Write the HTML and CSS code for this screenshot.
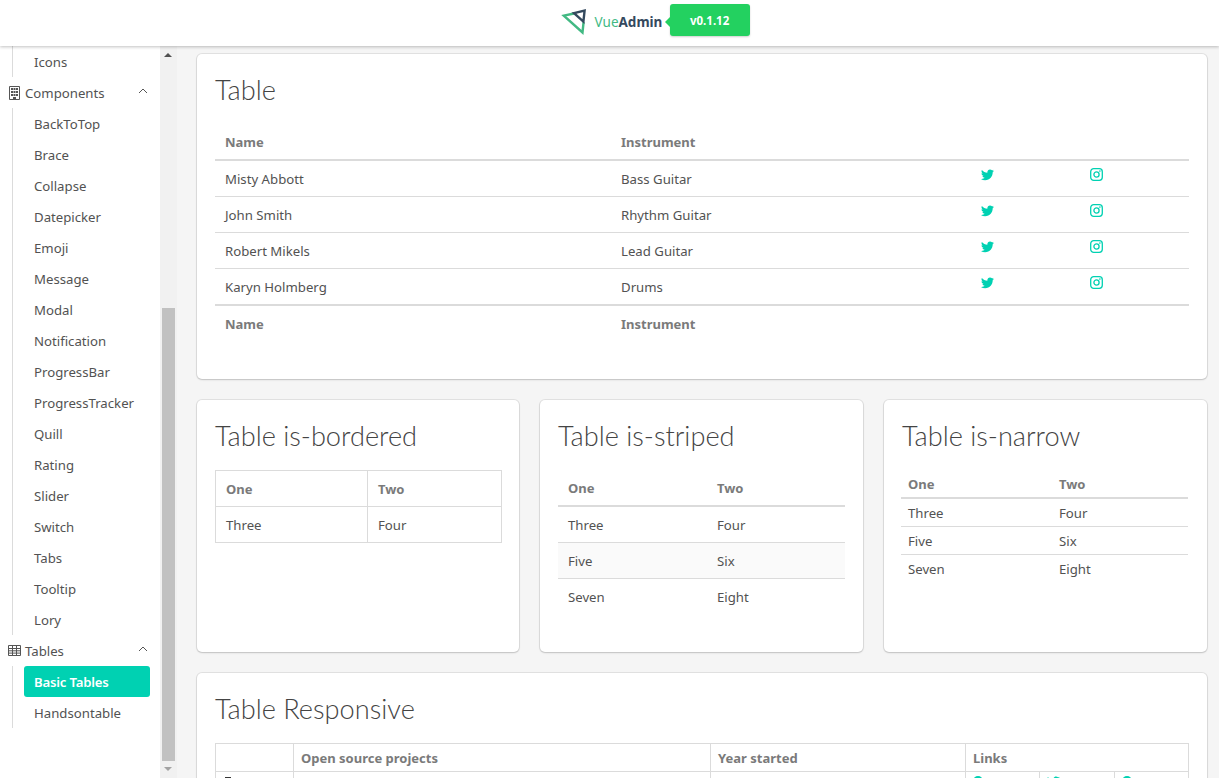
FILE: index.html
```html
<!DOCTYPE html>
<html lang="en">
	<head>
		<title>Basic Tables</title>
		<meta charset="utf-8">
		<link rel="stylesheet" href="styles.css">
	</head>

	<body>
		<svg class="sprites" width="0" height="0">
			<symbol id="twitter" viewBox="0 0 24 24"><path d="M22.46,6C21.69,6.35 20.86,6.58 20,6.69C20.88,6.16 21.56,5.32 21.88,4.31C21.05,4.81 20.13,5.16 19.16,5.36C18.37,4.5 17.26,4 16,4C13.65,4 11.73,5.92 11.73,8.29C11.73,8.63 11.77,8.96 11.84,9.27C8.28,9.09 5.11,7.38 3,4.79C2.63,5.42 2.42,6.16 2.42,6.94C2.42,8.43 3.17,9.75 4.33,10.5C3.62,10.5 2.96,10.3 2.38,10C2.38,10 2.38,10 2.38,10.03C2.38,12.11 3.86,13.85 5.82,14.24C5.46,14.34 5.08,14.39 4.69,14.39C4.42,14.39 4.15,14.36 3.89,14.31C4.43,16 6,17.26 7.89,17.29C6.43,18.44 4.58,19.13 2.56,19.13C2.22,19.13 1.88,19.11 1.54,19.07C3.44,20.29 5.7,21 8.12,21C16,21 20.33,14.46 20.33,8.79C20.33,8.6 20.33,8.42 20.32,8.23C21.16,7.63 21.88,6.87 22.46,6Z"/></symbol>
			<symbol id="instagram" viewBox="0 0 13 13"><rect x="0.7" y="0.7" width="11.6" height="11.6" rx="3" fill="none" stroke="currentColor" stroke-width="1.3"/><circle cx="6.5" cy="6.5" r="2.6" fill="none" stroke="currentColor" stroke-width="1.3"/><circle cx="9.9" cy="3.1" r="0.8"/></symbol>
			<symbol id="chevron" viewBox="0 0 10 6"><path d="M1 5l4-4 4 4" fill="none" stroke="currentColor" stroke-width="1"/></symbol>
		</svg>

		<header class="topbar">
			<svg class="logo" width="26" height="28" viewBox="0 0 26 28">
				<path d="M13 5.5L2.8 7.6 21.5 24.5 22.6 14" fill="none" stroke="#42b983" stroke-width="2.4"/>
				<path d="M13 5.2L23.6 2.6 22.4 13.6z" fill="none" stroke="#34495e" stroke-width="2.4"/>
			</svg>
			<span class="brand">Vue<b>Admin</b><span class="version">v0.1.12</span></span>
		</header>

		<div class="layout">
			<aside class="sidebar">
				<nav class="menu">
					<ul class="sublist">
						<li>Icons</li>
					</ul>
					<div class="menu-head">
						<svg class="menu-icon" width="13" height="14" viewBox="0 0 13 14"><path d="M1.5.5h10v13h-10z" fill="none" stroke="currentColor"/><path d="M3 2h2v2H3zM5.5 2h2v2h-2zM8 2h2v2H8zM3 5h2v2H3zM5.5 5h2v2h-2zM8 5h2v2H8zM3 8h2v2H3zM5.5 8h2v2h-2zM8 8h2v2H8zM5 11h3v2H5z" fill="currentColor"/></svg>
						<span>Components</span>
						<svg class="chevron"><use href="#chevron"/></svg>
					</div>
					<ul class="sublist">
						<li>BackToTop</li>
						<li>Brace</li>
						<li>Collapse</li>
						<li>Datepicker</li>
						<li>Emoji</li>
						<li>Message</li>
						<li>Modal</li>
						<li>Notification</li>
						<li>ProgressBar</li>
						<li>ProgressTracker</li>
						<li>Quill</li>
						<li>Rating</li>
						<li>Slider</li>
						<li>Switch</li>
						<li>Tabs</li>
						<li>Tooltip</li>
						<li>Lory</li>
					</ul>
					<div class="menu-head">
						<svg class="menu-icon" width="13" height="11" viewBox="0 0 13 11"><path d="M.5.5h12v10H.5zM.5 3.5h12M.5 5.8h12M.5 8.1h12M4.5 .5v10M8.5 .5v10" fill="none" stroke="currentColor"/></svg>
						<span>Tables</span>
						<svg class="chevron"><use href="#chevron"/></svg>
					</div>
					<ul class="sublist">
						<li class="active">Basic Tables</li>
						<li>Handsontable</li>
					</ul>
				</nav>
				<div class="scrollbar">
					<span class="arrow up"></span>
					<div class="thumb"></div>
					<span class="arrow down"></span>
				</div>
			</aside>

			<main class="content">
				<section class="card main-card">
					<h1>Table</h1>
					<table class="tbl plain">
						<thead>
							<tr><th class="w-name">Name</th><th class="w-inst">Instrument</th><th class="w-soc"></th><th></th></tr>
						</thead>
						<tfoot>
							<tr><th>Name</th><th>Instrument</th><th></th><th></th></tr>
						</tfoot>
						<tbody>
							<tr><td>Misty Abbott</td><td>Bass Guitar</td><td class="soc"><svg class="ic tw"><use href="#twitter"/></svg></td><td class="soc"><svg class="ic ig"><use href="#instagram"/></svg></td></tr>
							<tr><td>John Smith</td><td>Rhythm Guitar</td><td class="soc"><svg class="ic tw"><use href="#twitter"/></svg></td><td class="soc"><svg class="ic ig"><use href="#instagram"/></svg></td></tr>
							<tr><td>Robert Mikels</td><td>Lead Guitar</td><td class="soc"><svg class="ic tw"><use href="#twitter"/></svg></td><td class="soc"><svg class="ic ig"><use href="#instagram"/></svg></td></tr>
							<tr><td>Karyn Holmberg</td><td>Drums</td><td class="soc"><svg class="ic tw"><use href="#twitter"/></svg></td><td class="soc"><svg class="ic ig"><use href="#instagram"/></svg></td></tr>
						</tbody>
					</table>
				</section>

				<div class="three">
					<section class="card">
						<h1>Table is-bordered</h1>
						<table class="tbl bordered wide">
							<thead><tr><th class="w-bord">One</th><th>Two</th></tr></thead>
							<tbody><tr><td>Three</td><td>Four</td></tr></tbody>
						</table>
					</section>
					<section class="card">
						<h1>Table is-striped</h1>
						<table class="tbl striped">
							<thead><tr><th class="w-str">One</th><th>Two</th></tr></thead>
							<tbody>
								<tr><td>Three</td><td>Four</td></tr>
								<tr><td>Five</td><td>Six</td></tr>
								<tr><td>Seven</td><td>Eight</td></tr>
							</tbody>
						</table>
					</section>
					<section class="card">
						<h1>Table is-narrow</h1>
						<table class="tbl narrow">
							<thead><tr><th class="w-nar">One</th><th>Two</th></tr></thead>
							<tbody>
								<tr><td>Three</td><td>Four</td></tr>
								<tr><td>Five</td><td>Six</td></tr>
								<tr><td>Seven</td><td>Eight</td></tr>
							</tbody>
						</table>
					</section>
				</div>

				<section class="card">
					<h1>Table Responsive</h1>
					<table class="tbl bordered responsive">
						<thead>
							<tr><th class="w-r1"></th><th class="w-r2">Open source projects</th><th class="w-r3">Year started</th><th colspan="3">Links</th></tr>
						</thead>
						<tbody>
							<tr>
								<td><span class="mark"></span></td><td></td><td></td>
								<td class="w-r4"><span class="dot"></span></td>
								<td class="w-r5"><svg class="ic tw cut"><use href="#twitter"/></svg></td>
								<td><span class="dot"></span></td>
							</tr>
						</tbody>
					</table>
				</section>
			</main>
		</div>
	</body>
</html>
```

FILE: styles.css
```css
body {
	margin: 0;
	width: 100vw;
	height: 100vh;
	overflow: hidden;
	background-color: #f5f5f5;
	color: #525252;
	font-family: "Noto Sans", "Open Sans", sans-serif;
	font-size: 13.2px;
	line-height: 20px;
}

.sprites {
	display: block;
	height: 0;
}

.topbar {
	position: relative;
	z-index: 10;
	height: 46px;
	padding-left: 4px;
	box-sizing: border-box;
	display: flex;
	justify-content: center;
	align-items: flex-start;
	background-color: #fff;
	box-shadow: 0 1px 3px rgba(10, 10, 10, 0.25);
}

.logo {
	margin: 8px 8px 0 0;
}

.brand {
	position: relative;
	margin-top: 12px;
	color: #42b983;
	font-size: 13.5px;
}

.brand b {
	color: #34495e;
}

/* tooltip next to the brand */
.version {
	position: absolute;
	left: 75px;
	top: -8px;
	width: 80px;
	height: 32px;
	border-radius: 3px;
	background-color: #23d160;
	box-shadow: 0 1px 2px rgba(10, 10, 10, 0.2);
	color: #fff;
	font-size: 11.5px;
	font-weight: 700;
	line-height: 34px;
	text-align: center;
}

.version::before {
	content: "";
	position: absolute;
	left: -5px;
	top: 13px;
	border-top: 5px solid transparent;
	border-bottom: 5px solid transparent;
	border-right: 5px solid #23d160;
}

.layout {
	display: flex;
	height: 732px;
}

/* sidebar */
.sidebar {
	display: flex;
	flex: none;
	box-sizing: border-box;
	width: 177px;
	background-color: #fff;
}

.menu {
	width: 160px;
	flex: none;
}

.menu-head {
	display: flex;
	align-items: center;
	height: 31px;
	padding: 0 12px 0 8px;
	gap: 4px;
}

.menu-head span {
	flex: 1;
}

.menu-icon {
	flex: none;
	color: #555;
}

.chevron {
	width: 10px;
	height: 6px;
	margin-top: -3px;
	color: #555;
}

.sublist {
	margin: 0 0 0 12px;
	padding: 0 10px 0 11px;
	list-style: none;
	border-left: 1px solid #dbdbdb;
}

.sublist li {
	height: 31px;
	padding-left: 10px;
	border-radius: 3px;
	line-height: 33px;
}

.sublist .active {
	background-color: #00d1b2;
	color: #fff;
	font-weight: 600;
	letter-spacing: -0.2px;
}

.scrollbar {
	position: relative;
	width: 17px;
	background-color: #f1f1f1;
}

.thumb {
	position: absolute;
	left: 2px;
	top: 262px;
	width: 13px;
	height: 453px;
	background-color: #c1c1c1;
}

.arrow {
	position: absolute;
	left: 4px;
	border-left: 4px solid transparent;
	border-right: 4px solid transparent;
}

.arrow.up {
	top: 7px;
	border-bottom: 4px solid #505050;
}

.arrow.down {
	bottom: 7px;
	border-top: 4px solid #a3a3a3;
}

/* cards */
.content {
	flex: 1;
	min-width: 0;
	padding: 8px 12px 0 20px;
	display: flex;
	flex-direction: column;
	gap: 21px;
	border-left: 1px solid #e8e8e8;
	margin-left: -1px;
}

.card {
	flex: none;
	box-sizing: border-box;
	padding: 18px;
	background-color: #fff;
	border-radius: 5px;
	box-shadow: 0 1px 2px rgba(10, 10, 10, 0.15), 0 0 0 1px rgba(10, 10, 10, 0.08);
}

.main-card {
	height: 325px;
}

.card h1 {
	margin: 0 0 18px;
	padding-top: 2px;
	color: #444;
	font-family: Lato, "Open Sans", sans-serif;
	font-size: 27.2px;
	font-weight: 300;
	line-height: 32px;
}

.three {
	display: grid;
	flex: none;
	grid-template-columns: 322px 323px 323px;
	gap: 21px;
}

.three .card {
	height: 252px;
}

/* tables */
.tbl {
	width: 100%;
	border-collapse: collapse;
	table-layout: fixed;
}

.tbl th,
.tbl td {
	box-sizing: border-box;
	height: 36px;
	padding: 8px 10px 7px;
	border-bottom: 1px solid #dbdbdb;
	text-align: left;
}

.tbl th {
	color: #7a7a7a;
	font-size: 13px;
	font-weight: 700;
}

.tbl thead th {
	border-bottom-width: 2px;
}

.tbl tfoot th {
	border-top: 2px solid #dbdbdb;
	border-bottom: 0;
}

.tbl tbody tr:last-child td {
	border-bottom: 0;
}

.w-name { width: 396px; }
.w-inst { width: 359px; }
.w-soc { width: 110px; }

.soc {
	vertical-align: top;
}

.ic {
	display: block;
	color: #00d1b2;
	fill: currentColor;
}

.ic.tw {
	width: 15px;
	height: 15px;
	margin-top: -2px;
}

.ic.ig {
	width: 13px;
	height: 13px;
	margin-top: -1px;
}

.bordered th,
.bordered td,
.bordered thead th,
.bordered tbody tr:last-child td {
	border: 1px solid #dbdbdb;
}

.wide {
	width: calc(100% + 1px);
}

.w-bord { width: 152px; }
.w-str { width: 149px; }
.w-nar { width: 151px; }

.striped tbody tr:nth-child(2) {
	background-color: #fafafa;
}

.narrow {
	margin-left: -1px;
}

.narrow th,
.narrow td {
	height: 28px;
	padding: 4px 7px 3px;
}

.responsive th,
.responsive td {
	height: 28px;
	padding: 4px 7px 3px;
	vertical-align: top;
}

.w-r1 { width: 78px; }
.w-r2 { width: 417px; }
.w-r3 { width: 255px; }
.w-r4 { width: 73px; }
.w-r5 { width: 76px; }

.dot {
	display: block;
	width: 10px;
	height: 10px;
	border-radius: 50%;
	background-color: #00d1b2;
}

.mark {
	display: block;
	width: 6px;
	height: 2px;
	margin: 1px 0 0 2px;
	background-color: #363636;
}

.ic.tw.cut {
	margin-left: -1px;
}
```
